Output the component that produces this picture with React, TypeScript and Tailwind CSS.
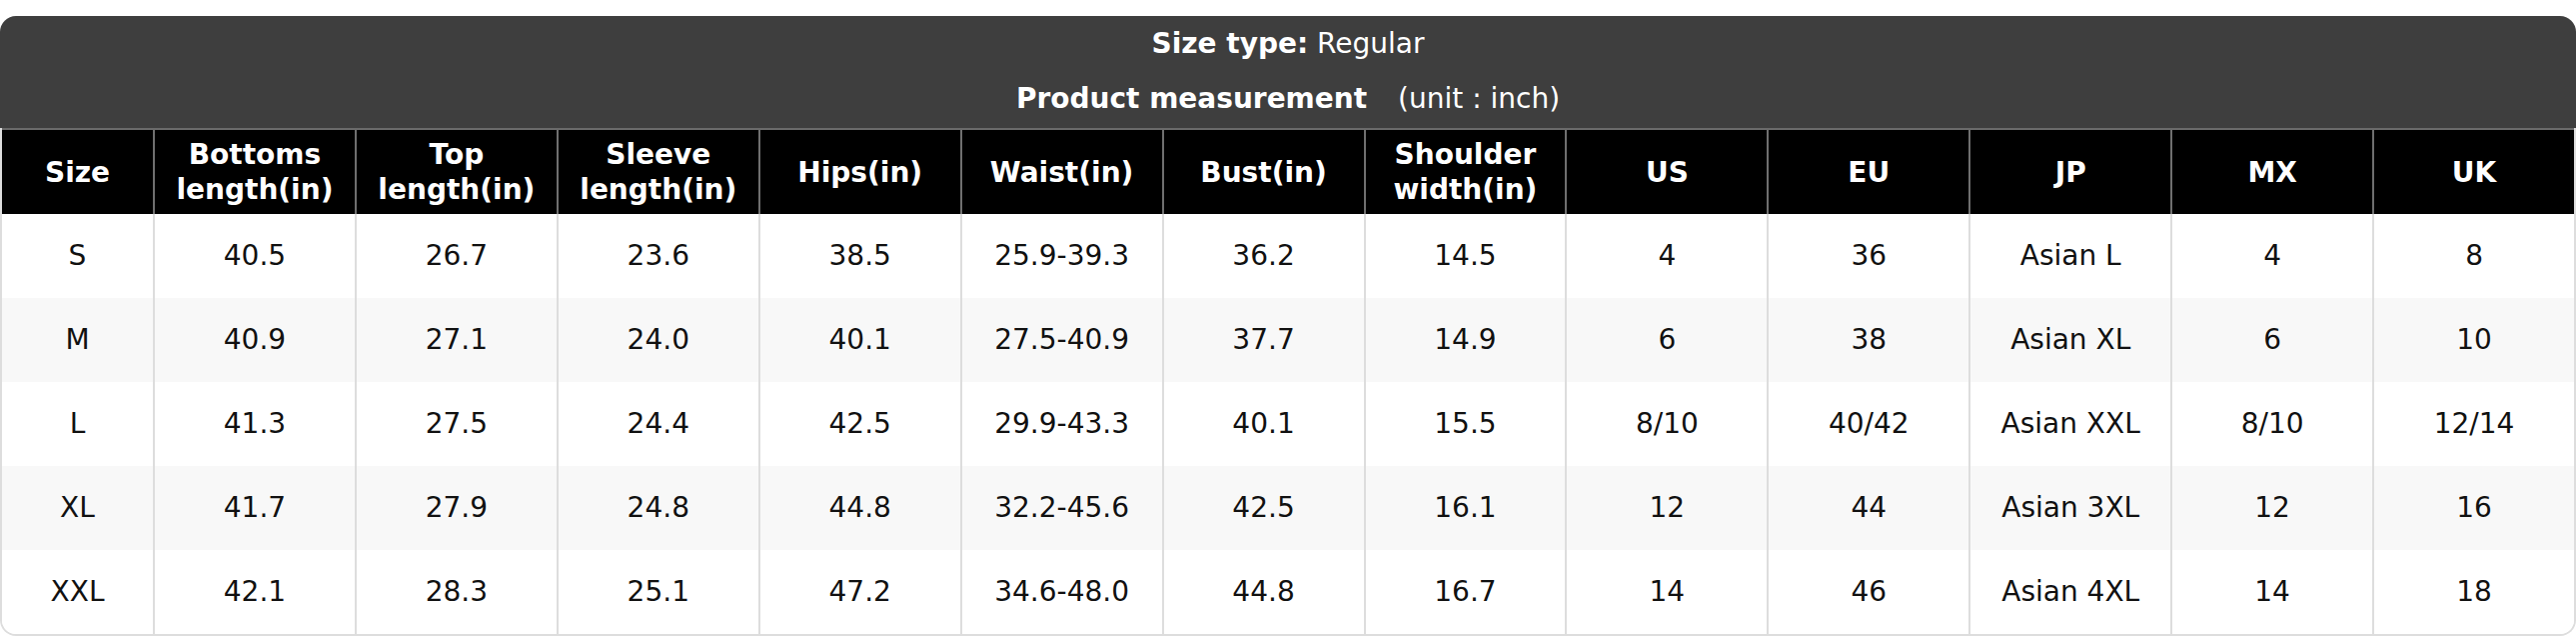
const headers = [
  ['Size'],
  ['Bottoms', 'length(in)'],
  ['Top', 'length(in)'],
  ['Sleeve', 'length(in)'],
  ['Hips(in)'],
  ['Waist(in)'],
  ['Bust(in)'],
  ['Shoulder', 'width(in)'],
  ['US'],
  ['EU'],
  ['JP'],
  ['MX'],
  ['UK'],
];

const rows = [
  ['S', '40.5', '26.7', '23.6', '38.5', '25.9-39.3', '36.2', '14.5', '4', '36', 'Asian L', '4', '8'],
  ['M', '40.9', '27.1', '24.0', '40.1', '27.5-40.9', '37.7', '14.9', '6', '38', 'Asian XL', '6', '10'],
  ['L', '41.3', '27.5', '24.4', '42.5', '29.9-43.3', '40.1', '15.5', '8/10', '40/42', 'Asian XXL', '8/10', '12/14'],
  ['XL', '41.7', '27.9', '24.8', '44.8', '32.2-45.6', '42.5', '16.1', '12', '44', 'Asian 3XL', '12', '16'],
  ['XXL', '42.1', '28.3', '25.1', '47.2', '34.6-48.0', '44.8', '16.7', '14', '46', 'Asian 4XL', '14', '18'],
];

export default function App() {
  return (
    <div className="bg-white pt-[16px] font-['DejaVu_Sans',sans-serif] text-[28px]">
      {/* Title */}
      <div className="rounded-t-[16px] bg-[#3e3e3e] pt-[4px] pb-[6px] text-center text-white">
        <div className="h-[47px] leading-[47px]">
          <span className="font-bold">Size type:</span> Regular
        </div>
        <div className="mt-[8px] h-[47px] leading-[47px]">
          <span className="font-bold">Product measurement</span>
          <span className="ml-[31px]">(unit : inch)</span>
        </div>
      </div>

      {/* Table */}
      <div className="overflow-hidden rounded-b-[16px] border-x-2 border-b-2 border-[#dddddd]">
        <div className="grid grid-cols-[151px_repeat(12,minmax(0,1fr))] border-t-2 border-[#6a6a6a] bg-black text-white">
          {headers.map((h, i) => (
            <div
              key={i}
              className={`flex h-[84px] flex-col items-center justify-center text-center font-bold leading-[35px] ${i > 0 ? 'border-l-2 border-[#6f6f6f]' : ''}`}
            >
              {h.map((line) => (
                <span key={line}>{line}</span>
              ))}
            </div>
          ))}
        </div>
        {rows.map((row, r) => (
          <div
            key={r}
            className={`grid grid-cols-[151px_repeat(12,minmax(0,1fr))] text-[#111] ${r % 2 === 1 ? 'bg-[#f8f8f8]' : 'bg-white'}`}
          >
            {row.map((cell, i) => (
              <div
                key={i}
                className={`flex h-[84px] items-center justify-center ${i > 0 ? 'border-l-2 border-[#dddddd]' : ''}`}
              >
                {cell}
              </div>
            ))}
          </div>
        ))}
      </div>
    </div>
  );
}
